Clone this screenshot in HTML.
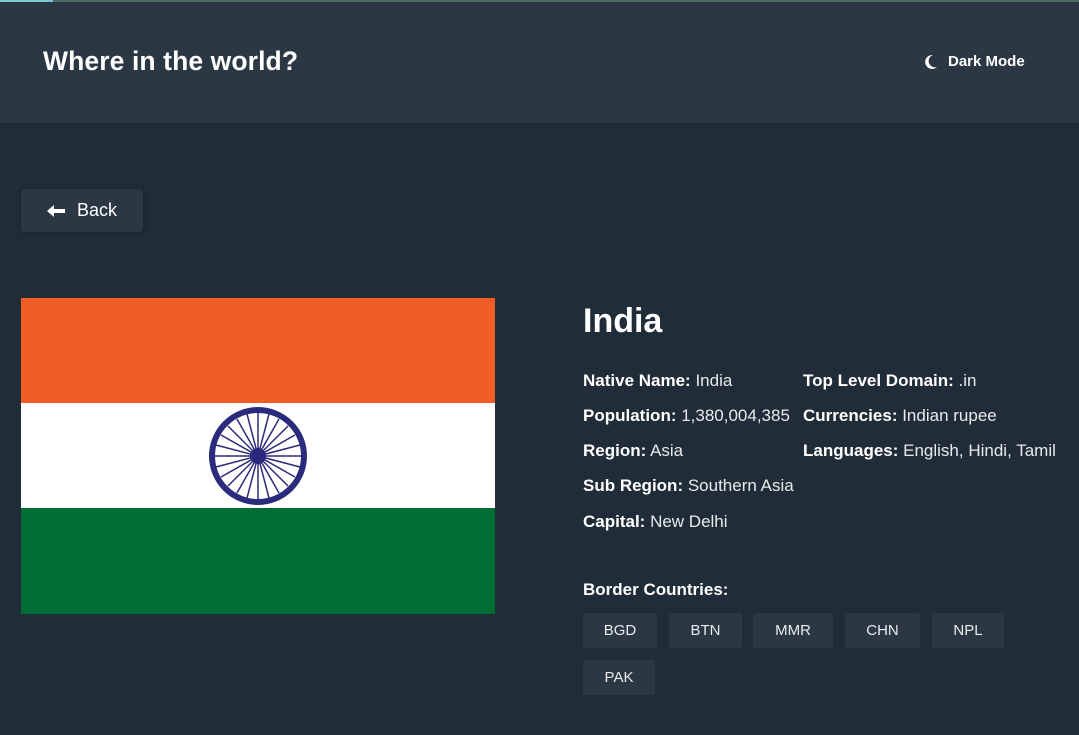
<!DOCTYPE html>
<html><head><style>
body{margin:0;width:1079px;height:735px;background:#202c37;font-family:"Liberation Sans",sans-serif;color:#fff;position:relative;overflow:hidden}
.bar{position:absolute;top:0;left:0;width:1079px;height:2px;background:#4f6a68}
.bar i{position:absolute;left:0;top:0;width:53px;height:2px;background:#7fc9d4}
header{position:absolute;top:2px;left:0;width:1079px;height:121px;background:#2b3844;box-shadow:0 2px 4px rgba(0,0,0,.1)}
h1{position:absolute;left:43px;top:44px;margin:0;font-size:26.5px;font-weight:bold;letter-spacing:.1px}
.dm{position:absolute;left:923px;top:51px;font-size:15px;font-weight:bold;display:flex;align-items:center;gap:10px}
.back{position:absolute;left:21px;top:189px;width:122px;height:43px;background:#2b3844;border-radius:4px;box-shadow:0 0 6px rgba(0,0,0,.2);font-size:18px;display:flex;align-items:center;justify-content:center;gap:12px;font-weight:300}
.flag{position:absolute;left:21px;top:298px;width:474px;height:316px}
h2{position:absolute;left:583px;top:302px;margin:0;font-size:34px;font-weight:bold}
.p{position:absolute;font-size:17px;white-space:nowrap;color:#e8eaec}
.p b{color:#fff}
.tag{position:absolute;height:35px;background:#2b3844;border-radius:2px;font-size:15px;display:flex;align-items:center;justify-content:center;color:#e8eaec}
</style></head><body>
<div class="bar"><i></i></div>
<header><h1>Where in the world?</h1>
<div class="dm"><svg width="15" height="16" viewBox="0 0 15 16"><path d="M10 1A7 7 0 1 0 14 13A6 6 0 0 1 10 1Z" fill="#fff"/></svg>Dark Mode</div></header>
<div class="back"><svg width="18" height="12" viewBox="0 0 18 12"><path d="M0 6L7 0V4H18V8H7V12Z" fill="#fff"/></svg>Back</div>
<svg class="flag" viewBox="0 0 474 316"><rect width="474" height="106" fill="#f15d27"/><rect y="105" width="474" height="106" fill="#fff"/><rect y="210" width="474" height="106" fill="#006d35"/>
<circle cx="237" cy="158" r="46" fill="none" stroke="#2b2a7c" stroke-width="6"/><circle cx="237" cy="158" r="8" fill="#2b2a7c"/>
<g stroke="#2b2a7c" stroke-width="1.5">
<line x1="237" y1="115" x2="237" y2="201"/><line x1="194" y1="158" x2="280" y2="158"/><line x1="207" y1="128" x2="267" y2="188"/><line x1="267" y1="128" x2="207" y2="188"/>
<line x1="226" y1="116" x2="248" y2="200"/><line x1="248" y1="116" x2="226" y2="200"/><line x1="195" y1="147" x2="279" y2="169"/><line x1="195" y1="169" x2="279" y2="147"/>
<line x1="216" y1="121" x2="258" y2="195"/><line x1="258" y1="121" x2="216" y2="195"/><line x1="200" y1="137" x2="274" y2="179"/><line x1="200" y1="179" x2="274" y2="137"/></g></svg>
<h2>India</h2>
<div class="p" style="left:583px;top:371px"><b>Native Name:</b> India</div>
<div class="p" style="left:583px;top:406px"><b>Population:</b> 1,380,004,385</div>
<div class="p" style="left:583px;top:441px"><b>Region:</b> Asia</div>
<div class="p" style="left:583px;top:476px"><b>Sub Region:</b> Southern Asia</div>
<div class="p" style="left:583px;top:512px"><b>Capital:</b> New Delhi</div>
<div class="p" style="left:803px;top:371px"><b>Top Level Domain:</b> .in</div>
<div class="p" style="left:803px;top:406px"><b>Currencies:</b> Indian rupee</div>
<div class="p" style="left:803px;top:441px"><b>Languages:</b> English, Hindi, Tamil</div>
<div class="p" style="left:583px;top:580px"><b>Border Countries:</b></div>
<div class="tag" style="left:583px;top:613px;width:74px">BGD</div>
<div class="tag" style="left:669px;top:613px;width:73px">BTN</div>
<div class="tag" style="left:753px;top:613px;width:80px">MMR</div>
<div class="tag" style="left:845px;top:613px;width:75px">CHN</div>
<div class="tag" style="left:932px;top:613px;width:72px">NPL</div>
<div class="tag" style="left:583px;top:660px;width:72px">PAK</div>
</body></html>
